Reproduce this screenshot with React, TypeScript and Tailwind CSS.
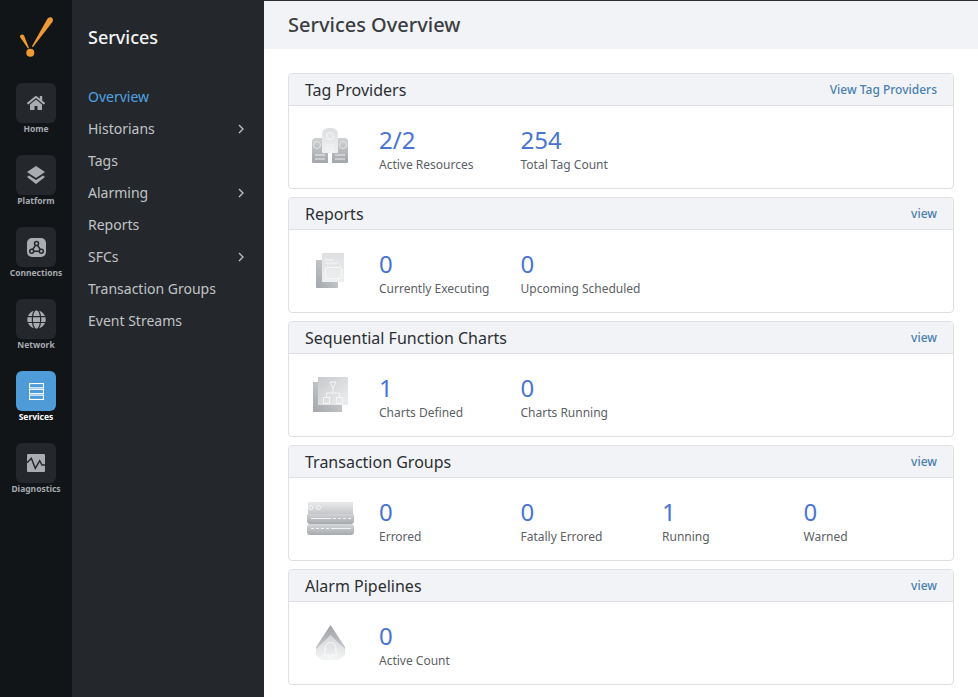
import { FaGlobe, FaHome } from "react-icons/fa";
import type { ReactNode } from "react";

const FONT = "font-['Noto_Sans',sans-serif]";

function GreyDefs() {
  return (
    <svg width="0" height="0" className="absolute">
      <defs>
        <linearGradient id="side" x1="0" y1="0" x2="0" y2="1">
          <stop offset="0" stopColor="#cfd1d3" />
          <stop offset="1" stopColor="#a3a6aa" />
        </linearGradient>
        <linearGradient id="back" x1="1" y1="0" x2="0" y2="1">
          <stop offset="0" stopColor="#d8dadc" />
          <stop offset="1" stopColor="#a3a6aa" />
        </linearGradient>
        <linearGradient id="front" x1="0" y1="0" x2="1" y2="1">
          <stop offset="0" stopColor="#c7c9cc" />
          <stop offset="1" stopColor="#eeeff0" />
        </linearGradient>
        <linearGradient id="light" x1="0" y1="0" x2="0" y2="1">
          <stop offset="0" stopColor="#dddfe1" />
          <stop offset="1" stopColor="#eff0f1" />
        </linearGradient>
        <linearGradient id="rackTop" x1="0" y1="0" x2="0" y2="1">
          <stop offset="0" stopColor="#e9eaeb" />
          <stop offset="1" stopColor="#c5c7ca" />
        </linearGradient>
        <linearGradient id="rackLow" x1="0" y1="0" x2="0" y2="1">
          <stop offset="0" stopColor="#d5d7d9" />
          <stop offset="1" stopColor="#a7aaad" />
        </linearGradient>
        <linearGradient id="roof" x1="0" y1="0" x2="0" y2="1">
          <stop offset="0" stopColor="#9fa2a6" />
          <stop offset="1" stopColor="#c9cbcd" />
        </linearGradient>
        <linearGradient id="bellBase" x1="0" y1="0" x2="0" y2="1">
          <stop offset="0" stopColor="#d3d5d7" />
          <stop offset="1" stopColor="#f4f5f5" />
        </linearGradient>
      </defs>
    </svg>
  );
}

function TagIcon() {
  return (
    <svg width="36" height="37" viewBox="0 0 36 37">
      <path d="M4 10h12v25H1a1 1 0 0 1-1-1V14a4 4 0 0 1 4-4ZM20 10h12a4 4 0 0 1 4 4v20a1 1 0 0 1-1 1H20Z" fill="url(#side)" />
      <circle cx="5" cy="17" r="3.500" fill="none" stroke="#e6e7e9" strokeWidth="1" />
      <circle cx="31" cy="17" r="3.500" fill="none" stroke="#e6e7e9" strokeWidth="1" />
      <path d="M3 27h10M3 31h10M23 27h10M23 31h10" stroke="#eeeff0" strokeWidth="1" />
      <path d="M10 6a6 6 0 0 1 6-6h4a6 6 0 0 1 6 6v18a1 1 0 0 1-1 1H11a1 1 0 0 1-1-1Z" fill="url(#light)" />
      <circle cx="18" cy="8" r="3.500" fill="none" stroke="#f7f7f8" strokeWidth="1" />
      <path d="M14 17h8M14 20h8M14 23h8" stroke="#f7f7f8" strokeWidth="1" />
    </svg>
  );
}

function ReportIcon() {
  return (
    <svg width="28" height="35" viewBox="0 0 28 35">
      <rect y="7" width="22" height="28" rx="1" fill="url(#back)" />
      <rect x="6" width="22" height="29" rx="1" fill="url(#light)" />
      <path d="M9 7h9M9 10h12" stroke="#f7f7f8" strokeWidth="1" />
      <rect x="9.500" y="14.500" width="16" height="11" rx="1.500" fill="none" stroke="#f7f7f8" strokeWidth="1" />
    </svg>
  );
}

function SfcIcon() {
  return (
    <svg width="35" height="35" viewBox="0 0 35 35">
      <rect y="5" width="29" height="30" fill="url(#back)" />
      <rect x="5" width="30" height="28" fill="url(#front)" />
      <path d="M17 5h6l-3 6Z" fill="none" stroke="#f4f5f5" strokeWidth="1" />
      <path d="M20 11v5M13.500 20v-4h13v4" fill="none" stroke="#f4f5f5" strokeWidth="1" />
      <rect x="10.500" y="20.500" width="6" height="6" fill="none" stroke="#f4f5f5" strokeWidth="1" />
      <rect x="23.500" y="20.500" width="6" height="6" fill="none" stroke="#f4f5f5" strokeWidth="1" />
    </svg>
  );
}

function GroupIcon() {
  return (
    <svg width="47" height="33" viewBox="0 0 47 33">
      <rect y="22" width="47" height="11" rx="3" fill="url(#rackLow)" />
      <rect y="11" width="47" height="11" rx="3" fill="url(#rackLow)" />
      <rect x="1" width="45" height="12" fill="url(#rackTop)" />
      <circle cx="4" cy="5.500" r="2" fill="none" stroke="#f7f7f8" strokeWidth="1" />
      <circle cx="11.500" cy="5.500" r="2" fill="none" stroke="#f7f7f8" strokeWidth="1" />
      <path d="M4 16.500h20M26 16.500h3M31 16.500h3M36 16.500h3M41 16.500h3M4 26.500h3M9 26.500h3M14 26.500h3M19 26.500h3M24 26.500h20" stroke="#f0f1f2" strokeWidth="1" />
    </svg>
  );
}

function AlarmIcon() {
  return (
    <svg width="29" height="35" viewBox="0 0 29 35">
      <path d="M14.500 0 29 22v4L14.500 14 0 26v-4Z" fill="url(#roof)" />
      <path d="M14.500 10 29 24v6l-6 5H6l-6-5v-6Z" fill="url(#bellBase)" />
      <path d="M9 28v-5a5.500 5.500 0 0 1 11 0v5l2 2H7ZM12.500 32h4" fill="none" stroke="#fafafa" strokeWidth="1" />
    </svg>
  );
}

function LayersGlyph() {
  return (
    <svg width="18" height="18" viewBox="0 0 18 18" fill="#a9acb0">
      <path d="M9 0 18 6 9 12 0 6Z" />
      <path d="M2 9.500 9 14l7-4.500 2 1.500-9 7-9-7Z" />
    </svg>
  );
}

function ConnectionsGlyph() {
  return (
    <svg width="19" height="19" viewBox="0 0 19 19">
      <rect width="19" height="19" rx="5" fill="#a9acb0" />
      <g fill="none" stroke="#24282c" strokeWidth="1.500">
        <circle cx="9.500" cy="5.500" r="2" />
        <circle cx="4.700" cy="13.300" r="2" />
        <circle cx="14.300" cy="13.300" r="2" />
        <path d="M8.500 7.300 5.700 11.500M10.500 7.300l2.800 4.200M6.700 13.300h5.600" />
      </g>
    </svg>
  );
}

function ServicesGlyph() {
  return (
    <svg width="15" height="17" viewBox="0 0 15 17" fill="none" stroke="#fff" strokeWidth="1.100">
      <rect x="0.550" y="0.550" width="13.900" height="4.300" />
      <rect x="0.550" y="6.350" width="13.900" height="4.300" />
      <rect x="0.550" y="12.150" width="13.900" height="4.300" />
    </svg>
  );
}

function DiagnosticsGlyph() {
  return (
    <svg width="18" height="18" viewBox="0 0 18 18">
      <rect width="18" height="18" rx="1" fill="#a9acb0" />
      <path d="M0 8.700 4.300 4.300 8.300 14.300 12.700 6.700 15 11h3" fill="none" stroke="#24282c" strokeWidth="1.500" />
    </svg>
  );
}

function Logo() {
  return (
    <svg width="34" height="41" viewBox="0 0 34 41" fill="#ee9933">
      <path d="M28 2.500C29.500-.5 33-.2 33.800 2c.4 1.200 0 2.300-.6 3.300L14 30l-1.200-.5Z" />
      <path d="M1 20c-.6-1.700 2.500-3.600 4-1.500L10 31l-1 .5Z" />
      <circle cx="11.300" cy="35.700" r="4" />
    </svg>
  );
}

const RAIL: { label: string; icon: ReactNode; active?: boolean }[] = [
  { label: "Home", icon: <FaHome size={18} color="#a9acb0" /> },
  { label: "Platform", icon: <LayersGlyph /> },
  { label: "Connections", icon: <ConnectionsGlyph /> },
  { label: "Network", icon: <FaGlobe size={19} color="#a9acb0" /> },
  { label: "Services", icon: <ServicesGlyph />, active: true },
  { label: "Diagnostics", icon: <DiagnosticsGlyph /> },
];

const MENU = [
  { label: "Overview", active: true },
  { label: "Historians", more: true },
  { label: "Tags" },
  { label: "Alarming", more: true },
  { label: "Reports" },
  { label: "SFCs", more: true },
  { label: "Transaction Groups" },
  { label: "Event Streams" },
];

const CARDS: { title: string; link: string; icon: ReactNode; stats: [string, string][] }[] = [
  {
    title: "Tag Providers",
    link: "View Tag Providers",
    icon: <TagIcon />,
    stats: [
      ["2/2", "Active Resources"],
      ["254", "Total Tag Count"],
    ],
  },
  {
    title: "Reports",
    link: "view",
    icon: <ReportIcon />,
    stats: [
      ["0", "Currently Executing"],
      ["0", "Upcoming Scheduled"],
    ],
  },
  {
    title: "Sequential Function Charts",
    link: "view",
    icon: <SfcIcon />,
    stats: [
      ["1", "Charts Defined"],
      ["0", "Charts Running"],
    ],
  },
  {
    title: "Transaction Groups",
    link: "view",
    icon: <GroupIcon />,
    stats: [
      ["0", "Errored"],
      ["0", "Fatally Errored"],
      ["1", "Running"],
      ["0", "Warned"],
    ],
  },
  {
    title: "Alarm Pipelines",
    link: "view",
    icon: <AlarmIcon />,
    stats: [["0", "Active Count"]],
  },
];

function Card({ title, link, icon, stats }: (typeof CARDS)[number]) {
  return (
    <section className="h-[116px] overflow-hidden rounded border border-[#dfe0e3] bg-white">
      <header className="flex h-[32px] items-center justify-between border-b border-[#dfe0e3] bg-[#f2f3f7] pl-4 pr-4">
        <h2 className="text-base leading-none text-[#2b2f33]">{title}</h2>
        <a className="text-xs font-medium text-[#4a7fae]">{link}</a>
      </header>
      <div className="flex h-[82px] items-center">
        <div className="flex w-[90px] shrink-0 justify-center pr-[8px] pb-[1px]">{icon}</div>
        <div className="grid flex-1 grid-cols-[repeat(4,141.5px)] self-start pt-[18px]">
          {stats.map(([value, label]) => (
            <div key={label} className="flex flex-col">
              <span className="text-2xl leading-[32px] text-[#4a74d4]">{value}</span>
              <span className="mt-[1px] text-xs leading-[16px] text-[#5c6166]">{label}</span>
            </div>
          ))}
        </div>
      </div>
    </section>
  );
}

export default function App() {
  return (
    <div className={`${FONT} flex h-[697px] w-[978px] overflow-hidden bg-white`}>
      <GreyDefs />
      <aside className="flex w-[72px] shrink-0 flex-col items-center bg-[#121518]">
        <div className="mt-[17px] mb-[25px] flex h-[41px] items-start justify-center">
          <Logo />
        </div>
        <nav className="flex flex-col gap-[16px]">
          {RAIL.map(({ label, icon, active }) => (
            <a key={label} className="flex h-[56px] w-[72px] flex-col items-center">
              <span
                className={`flex h-10 w-10 items-center justify-center rounded-md ${
                  active ? "bg-[#4e9bd8]" : "bg-[#24282c]"
                }`}
              >
                {icon}
              </span>
              <span
                className={`text-[8.5px] font-bold leading-[12px] ${
                  active ? "text-white" : "text-[#a4a9ae]"
                }`}
              >
                {label}
              </span>
            </a>
          ))}
        </nav>
      </aside>

      <aside className="w-[192px] shrink-0 bg-[#24282c] pl-4 pr-4">
        <h1 className="pt-[24px] text-lg font-medium leading-[27px] text-[#f4f5f6]">Services</h1>
        <nav className="mt-[30px] flex flex-col">
          {MENU.map(({ label, active, more }) => (
            <a
              key={label}
              className={`flex h-8 items-center justify-between pr-[4px] text-sm ${
                active ? "text-[#4fa3e3]" : "text-[#c0c3c6]"
              }`}
            >
              {label}
              {more && (
                <svg width="6" height="10" viewBox="0 0 6 10" fill="none" stroke="#c0c3c6" strokeWidth="1.300">
                  <path d="m1 1 4 4-4 4" />
                </svg>
              )}
            </a>
          ))}
        </nav>
      </aside>

      <main className="flex min-w-0 flex-1 flex-col">
        <div className="flex h-[49px] items-center border-t border-[#2b2f33] bg-[#f2f3f7] pl-6">
          <h1 className="text-xl font-medium text-[#3a3e42]">Services Overview</h1>
        </div>
        <div className="flex flex-col gap-2 pt-6 pr-6 pl-6">
          {CARDS.map((card) => (
            <Card key={card.title} {...card} />
          ))}
        </div>
      </main>
    </div>
  );
}
